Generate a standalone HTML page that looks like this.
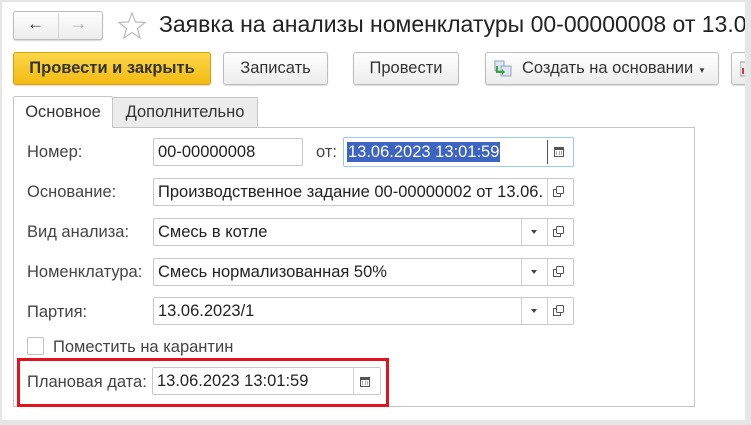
<!DOCTYPE html>
<html><head><meta charset="utf-8"><style>
*{box-sizing:border-box;margin:0;padding:0}
body{width:751px;height:425px;background:#e6e6e6;position:relative;overflow:hidden;font-family:"Liberation Sans",Arial,sans-serif;font-size:16.5px;color:#333}
.win{position:absolute;left:2px;top:2px;width:743px;height:418px;background:#fff}
.a{position:absolute}
.btn{position:absolute;border:1px solid #bdbdbd;border-radius:3px;background:linear-gradient(#fff,#ececec);box-shadow:0 1px 1px rgba(0,0,0,.15);font-size:16.5px;color:#333;text-align:center;line-height:30px;white-space:nowrap}
.fld{position:absolute;border:1px solid #c8c8c8;border-radius:2px;background:#fff;height:28px;line-height:26px;padding-left:4px;color:#222;font-size:16.5px;white-space:nowrap;overflow:hidden}
.lbl{position:absolute;color:#444;font-size:16.5px;white-space:nowrap}
.sep{position:absolute;top:0;bottom:0;border-left:1px solid #d0d0d0;background:#fff;width:40px}
.dd{position:absolute;top:11px;width:0;height:0;border-left:3px solid transparent;border-right:3px solid transparent;border-top:4px solid #444}
</style></head><body>
<div class="win"></div>
<div class="btn" style="left:13px;top:11px;width:90px;height:29px;line-height:27px"></div>
<div class="a" style="left:58px;top:13px;height:26px;border-left:1px solid #d5d5d5"></div>
<div class="a" style="left:27px;top:14px;font-size:17px;color:#333;font-weight:bold">&#8592;</div>
<div class="a" style="left:70px;top:14px;font-size:17px;color:#aaa;font-weight:bold">&#8594;</div>
<svg class="a" style="left:117px;top:11px" width="30" height="30" viewBox="0 0 30 30"><polygon points="15,2 18.5,11 28,11.5 20.5,17.5 23,27 15,21.5 7,27 9.5,17.5 2,11.5 11.5,11" fill="none" stroke="#bbb" stroke-width="1.2"/></svg>
<div class="a" style="left:159px;top:11px;font-size:23px;color:#222;white-space:nowrap">Заявка на анализы номенклатуры 00-00000008 от 13.06</div>
<div class="btn" style="left:13px;top:52px;width:198px;height:33px;background:linear-gradient(#fcd64a,#f2bb12);border-color:#d6a40c;font-weight:bold;color:#333;line-height:31px">Провести и закрыть</div>
<div class="btn" style="left:223px;top:52px;width:105px;height:33px;line-height:31px">Записать</div>
<div class="btn" style="left:353px;top:52px;width:106px;height:33px;line-height:31px">Провести</div>
<div class="btn" style="left:485px;top:52px;width:234px;height:33px;line-height:31px;text-align:left;padding-left:36px">Создать на основании <span style="font-size:9px;margin-left:2px">&#9662;</span></div>
<svg class="a" style="left:494px;top:60px" width="20" height="18"><rect x="1" y="1" width="9" height="10" fill="#dde6f2" stroke="#8fa3c0"/><rect x="7" y="6" width="10" height="10" fill="#dde6f2" stroke="#8fa3c0"/><path d="M3 6v6h6" fill="none" stroke="#3aa53a" stroke-width="2"/><path d="M8 9l3 3-3 3z" fill="#3aa53a"/></svg>
<div class="btn" style="left:731px;top:52px;width:40px;height:33px"></div>
<svg class="a" style="left:740px;top:60px" width="8" height="18"><rect x="0" y="2" width="8" height="14" fill="#eee" stroke="#999"/><rect x="2" y="8" width="2" height="6" fill="#d33"/></svg>
<div class="a" style="left:745px;top:0;width:6px;height:425px;background:#e6e6e6"></div>
<div class="a" style="left:13px;top:127px;width:682px;height:280px;border:1px solid #c6c6c6;background:#fff"></div>
<div class="a" style="left:112px;top:97px;width:146px;height:31px;border:1px solid #c6c6c6;background:#ececec;border-radius:2px 2px 0 0;line-height:29px;text-align:center;color:#333">Дополнительно</div>
<div class="a" style="left:13px;top:96px;width:100px;height:32px;border:1px solid #c6c6c6;border-bottom:none;background:#fff;border-radius:2px 2px 0 0;line-height:30px;text-align:center;color:#333">Основное</div>
<div class="lbl" style="left:27px;top:143px">Номер:</div>
<div class="fld" style="left:153px;top:138px;width:150px">00-00000008</div>
<div class="lbl" style="left:316px;top:143px">от:</div>
<div class="fld" style="left:343px;top:137px;width:231px;height:30px;border-color:#9cc7ef;line-height:28px;padding-left:3px"><span style="background:#3c64c0;color:#fff;padding:1px 1px">13.06.2023 13:01:59</span><div class="sep" style="left:203px;border-color:#555;top:2px;bottom:2px"></div></div>
<svg class="a" style="left:554px;top:146px" width="10" height="11"><rect x="0.5" y="1.5" width="9" height="9" fill="none" stroke="#555"/><rect x="0" y="1" width="10" height="3" fill="#555"/><path d="M2 6h1M5 6h1M8 6h-1M2 8h1M5 8h1M7 8h1" stroke="#555"/></svg>
<div class="lbl" style="left:27px;top:183px">Основание:</div>
<div class="fld" style="left:153px;top:178px;width:421px">Производственное задание 00-00000002 от 13.06.<div class="sep" style="left:393px"></div></div>
<div class="lbl" style="left:27px;top:223px">Вид анализа:</div>
<div class="fld" style="left:153px;top:218px;width:421px">Смесь в котле<div class="sep" style="left:367px"></div><div class="sep" style="left:393px"></div><div class="dd" style="left:377px"></div></div>
<div class="lbl" style="left:27px;top:263px">Номенклатура:</div>
<div class="fld" style="left:153px;top:258px;width:421px">Смесь нормализованная 50%<div class="sep" style="left:367px"></div><div class="sep" style="left:393px"></div><div class="dd" style="left:377px"></div></div>
<div class="lbl" style="left:27px;top:303px">Партия:</div>
<div class="fld" style="left:153px;top:297px;width:421px">13.06.2023/1<div class="sep" style="left:367px"></div><div class="sep" style="left:393px"></div><div class="dd" style="left:377px"></div></div>
<svg class="a" style="left:551px;top:180px" width="14" height="140" fill="none" stroke="#555" stroke-width="1">
<g transform="translate(2,6)"><rect x="3.5" y="0.5" width="7" height="7" rx="1"/><path d="M3 3.5H0.5v7h7V8"/></g>
<g transform="translate(2,46)"><rect x="3.5" y="0.5" width="7" height="7" rx="1"/><path d="M3 3.5H0.5v7h7V8"/></g>
<g transform="translate(2,86)"><rect x="3.5" y="0.5" width="7" height="7" rx="1"/><path d="M3 3.5H0.5v7h7V8"/></g>
<g transform="translate(2,125)"><rect x="3.5" y="0.5" width="7" height="7" rx="1"/><path d="M3 3.5H0.5v7h7V8"/></g>
</svg>
<div class="a" style="left:27px;top:337px;width:17px;height:18px;border:1px solid #c2c2c2;border-radius:2px;background:#fff"></div>
<div class="lbl" style="left:53px;top:338px">Поместить на карантин</div>
<div class="lbl" style="left:27px;top:373px">Плановая дата:</div>
<div class="fld" style="left:152px;top:367px;width:229px">13.06.2023 13:01:59<div class="sep" style="left:200px"></div></div>
<svg class="a" style="left:360px;top:376px" width="10" height="11"><rect x="0.5" y="1.5" width="9" height="9" fill="none" stroke="#555"/><rect x="0" y="1" width="10" height="3" fill="#555"/><path d="M2 6h1M5 6h1M8 6h-1M2 8h1M5 8h1M7 8h1" stroke="#555"/></svg>
<div class="a" style="left:17px;top:358px;width:372px;height:49px;border:3px solid #e4121c"></div>
</body></html>
